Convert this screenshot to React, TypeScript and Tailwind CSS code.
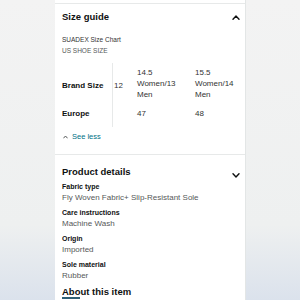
import React from 'react'

const font = { fontFamily: '"Liberation Sans", Arial, sans-serif' }

function Caret({ up = true, className = '' }: { up?: boolean; className?: string }) {
  return (
    <svg width="8" height="5" viewBox="0 0 8 5" className={className} aria-hidden>
      <polyline
        points={up ? '1,4.2 4,1 7,4.2' : '1,0.8 4,4 7,0.8'}
        fill="none"
        stroke="currentColor"
        strokeWidth="1.4"
        strokeLinecap="round"
        strokeLinejoin="round"
      />
    </svg>
  )
}

const details = [
  { label: 'Fabric type', value: 'Fly Woven Fabric+ Slip-Resistant Sole' },
  { label: 'Care instructions', value: 'Machine Wash' },
  { label: 'Origin', value: 'Imported' },
  { label: 'Sole material', value: 'Rubber' },
]

export default function App() {
  return (
    <div
      className="w-[300px] h-[300px] overflow-hidden pl-[55px] bg-[linear-gradient(to_bottom,#f3f3f3_0%,#eef0f0_75%,#dbe2ec_100%)]"
      style={font}
    >
      <div className="w-[191px] h-[300px] bg-white border-r border-[#e3e6e6] text-[#0f1111]">
        {/* top divider */}
        <div className="h-[4px] border-b border-[#e7e9e9]" />

        {/* Size guide */}
        <section className="pl-[7px] pr-[5px] pb-[12px] border-b border-[#e7e9e9]">
          <div className="flex items-center justify-between mt-[6px]">
            <h2 className="text-[9.5px] leading-[14px] font-bold">Size guide</h2>
            <Caret className="text-[#0f1111]" />
          </div>
          <p className="mt-[10px] text-[6.5px] leading-[11px] text-[#333]">SUADEX Size Chart</p>
          <p className="text-[6.5px] leading-[11px] text-[#565959]">US SHOE SIZE</p>

          <div className="mt-[7px] flex text-[8px] leading-[11px] overflow-hidden">
            <div className="w-[51px] shrink-0 border-r border-[#e7e9e9] font-bold">
              <div className="h-[41px] pt-[4px] flex items-center">Brand Size</div>
              <div className="pt-[4px] pb-[8px]">Europe</div>
            </div>
            <div className="w-[24px] shrink-0 pl-[1px] text-[#333]">
              <div className="h-[41px] pt-[4px] flex items-center">12</div>
            </div>
            <div className="w-[58px] shrink-0 text-[#333]">
              <div className="h-[41px] pt-[4px]">
                <div>14.5</div>
                <div>Women/13</div>
                <div>Men</div>
              </div>
              <div className="pt-[4px]">47</div>
            </div>
            <div className="w-[58px] shrink-0 text-[#333]">
              <div className="h-[41px] pt-[4px]">
                <div>15.5</div>
                <div>Women/14</div>
                <div>Men</div>
              </div>
              <div className="pt-[4px]">48</div>
            </div>
          </div>

          <div className="mt-[4px] flex items-center gap-[4px] pl-[1px] text-[7.5px] leading-[11px] text-[#007185]">
            <svg width="5" height="4" viewBox="0 0 5 4" aria-hidden className="text-[#565959]">
              <polyline points="0.7,3 2.5,1 4.3,3" fill="none" stroke="currentColor" strokeWidth="1" strokeLinecap="round" />
            </svg>
            <span>See less</span>
          </div>
        </section>

        {/* Product details */}
        <section className="pl-[7px] pr-[5px]">
          <div className="flex items-end justify-between mt-[10px]">
            <h2 className="text-[9.5px] leading-[14px] font-bold">Product details</h2>
            <Caret up={false} className="text-[#0f1111] mb-[1px]" />
          </div>
          <div className="mt-[3px]">
            {details.map((d) => (
              <div key={d.label} className="mb-[5px]">
                <div className="text-[7px] leading-[10px] font-bold">{d.label}</div>
                <div className="text-[8px] leading-[11px] text-[#565959]">{d.value}</div>
              </div>
            ))}
          </div>
          <h2 className="mt-[3px] text-[9.5px] leading-[12px] font-bold">About this item</h2>
          <div className="-mt-[1px] w-[18px] h-[2px] bg-[#2f5f75]" />
        </section>
      </div>
    </div>
  )
}
